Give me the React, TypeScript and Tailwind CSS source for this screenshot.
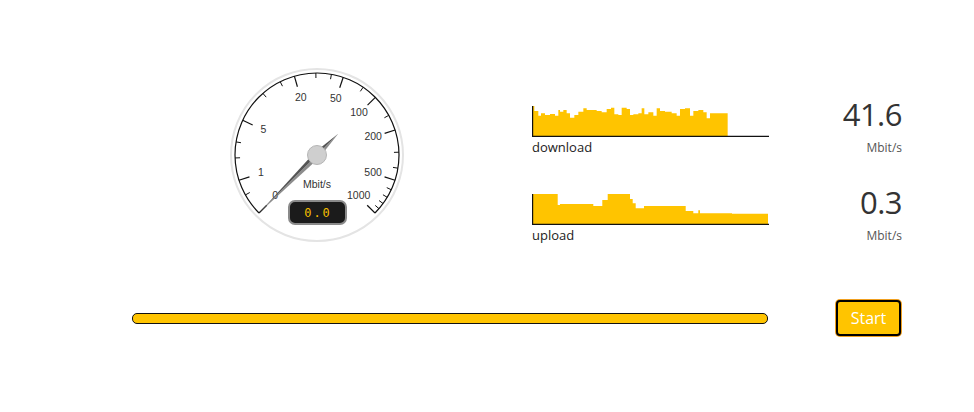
import React from "react";

const YELLOW = "#ffc400";

// gauge uses a log(1+v) scale, 270 degrees wide
const angleFor = (v: number) => -135 + (Math.log(1 + v) / Math.log(1001)) * 270;

const polar = (r: number, deg: number, cx = 89, cy = 89) => {
  const a = (deg * Math.PI) / 180;
  return { x: cx + r * Math.sin(a), y: cy - r * Math.cos(a) };
};

const majorTicks = [0, 1, 5, 20, 50, 100, 200, 500, 1000];
const minorTicks = [0.5, 2, 3, 10, 15, 30, 40, 75, 150, 300, 400, 600, 700, 800, 900];

const Gauge: React.FC = () => {
  const arcStart = polar(82, -135);
  const arcEnd = polar(82, 135);
  return (
    <svg width="178" height="178" viewBox="0 0 178 178" className="shrink-0">
      <circle cx="89" cy="89" r="86" fill="#fff" stroke="#e4e4e4" strokeWidth="2" />
      <path
        d={`M ${arcStart.x} ${arcStart.y} A 82 82 0 1 1 ${arcEnd.x} ${arcEnd.y}`}
        fill="none"
        stroke="#111"
        strokeWidth="1.2"
      />
      {majorTicks.map((v) => {
        const a = angleFor(v);
        const p1 = polar(82, a);
        const p2 = polar(71, a);
        const t = polar(59, a);
        return (
          <g key={v}>
            <line x1={p1.x} y1={p1.y} x2={p2.x} y2={p2.y} stroke="#111" strokeWidth="1.2" />
            <text
              x={t.x}
              y={t.y - 1.5}
              textAnchor="middle"
              dominantBaseline="central"
              fontSize="10.5"
              fill="#333"
              fontFamily="'Liberation Sans', Arial, sans-serif"
            >
              {v}
            </text>
          </g>
        );
      })}
      {minorTicks.map((v) => {
        const a = angleFor(v);
        const p1 = polar(82, a);
        const p2 = polar(77, a);
        return <line key={v} x1={p1.x} y1={p1.y} x2={p2.x} y2={p2.y} stroke="#111" strokeWidth="1" />;
      })}
      <text
        x="89"
        y="118"
        textAnchor="middle"
        dominantBaseline="central"
        fontSize="10.5"
        fill="#333"
        fontFamily="'Liberation Sans', Arial, sans-serif"
      >
        Mbit/s
      </text>
      <rect x="61" y="135" width="57" height="23" rx="6" fill="#1b1b1b" stroke="#8a8a8a" strokeWidth="2" />
      <text
        x="90"
        y="146.5"
        textAnchor="middle"
        dominantBaseline="central"
        fontSize="12"
        fill="#f5bf00"
        letterSpacing="2"
        fontFamily="'DejaVu Sans Mono', monospace"
      >
        0.0
      </text>
      {/* needle resting at 0 */}
      <g transform="rotate(-135 89 89)">
        <polygon points="89,7 85.5,89 89,119" fill="#8c8c8c" />
        <polygon points="89,7 92.5,89 89,119" fill="#555" />
      </g>
      <circle cx="89" cy="89" r="9.5" fill="#cfcfcf" stroke="#b5b5b5" strokeWidth="1" />
    </svg>
  );
};

// [end x in zoom coords, top y in zoom coords]
const downloadSteps: [number, number][] = [
  [28, 33], [40, 48], [48, 62], [60, 55], [75, 60], [90, 57], [100, 62], [105, 45],
  [115, 50], [125, 45], [135, 55], [148, 68], [160, 60], [175, 50], [185, 40], [195, 45],
  [215, 45], [230, 48], [245, 52], [258, 42], [268, 38], [280, 58], [290, 60], [305, 38],
  [315, 42], [325, 60], [340, 58], [350, 55], [358, 40], [370, 58], [385, 52], [395, 62],
  [405, 40], [420, 48], [440, 50], [455, 55], [465, 62], [480, 42], [495, 40], [505, 62],
  [520, 48], [535, 45], [545, 52], [555, 70], [608, 55],
];

const uploadSteps: [number, number][] = [
  [25.7, 30], [28, 19], [61.3, 20], [70.3, 18], [75.7, 24], [98, 30], [100.7, 25],
  [103.7, 20.7], [112, 15.7], [153.7, 18], [161.3, 13], [166.3, 10.7], [168, 13.7],
  [200, 10.7], [236, 10.2],
];

const stepPath = (steps: [number, number][], base: number) => {
  let d = `M 1 ${base}`;
  let x = 1;
  steps.forEach(([end, h]) => {
    d += ` L ${x} ${base - h} L ${end} ${base - h}`;
    x = end;
  });
  d += ` L ${x} ${base} Z`;
  return d;
};

const Chart: React.FC<{ steps: [number, number][] }> = ({ steps }) => (
  <svg width="237" height="31" viewBox="0 0 237 31" className="block">
    <path d={stepPath(steps, 30)} fill={YELLOW} />
    <line x1="0.6" y1="0" x2="0.6" y2="31" stroke="#111" strokeWidth="1.2" />
    <line x1="0" y1="30.4" x2="237" y2="30.4" stroke="#111" strokeWidth="1.2" />
  </svg>
);

const downloadData = downloadSteps.map(([cx, cy]) => [cx / 3 - 7, (123 - cy) / 3] as [number, number]);

const StatRow: React.FC<{ label: string; value: string; steps: [number, number][]; className?: string }> = ({
  label,
  value,
  steps,
  className,
}) => (
  <div className={`flex items-start justify-between ${className ?? ""}`}>
    <div className="mt-[7px] flex flex-col">
      <Chart steps={steps} />
      <span className="mt-[2px] text-[13px] leading-[16px] text-[#222]">{label}</span>
    </div>
    <div className="flex flex-col items-end">
      <span className="text-[31px] leading-[30px] font-normal tracking-[-0.5px] text-[#333]">{value}</span>
      <span className="mt-[11px] text-[12px] leading-[16px] text-[#555]">Mbit/s</span>
    </div>
  </div>
);

const App: React.FC = () => {
  return (
    <div
      className="w-[974px] h-[412px] bg-white overflow-hidden"
      style={{ fontFamily: "'Open Sans', 'Noto Sans', sans-serif" }}
    >
      {/* Top: gauge + charts */}
      <div className="flex pt-[66px] pl-[228px]">
        <Gauge />
        <div className="ml-[126px] w-[370px] flex flex-col">
          <StatRow className="mt-[33px]" label="download" value="41.6" steps={downloadData} />
          <StatRow className="mt-[31px]" label="upload" value="0.3" steps={uploadSteps} />
        </div>
      </div>

      {/* Bottom: progress + start */}
      <div className="flex items-center pl-[132px] mt-[56px]">
        <div className="w-[636px] h-[11px] mt-[1px] rounded-[5px] border-[1.5px] border-[#111] bg-[#ffc400]" />
        <button className="ml-[68px] w-[65px] h-[36px] rounded-[4px] border-2 border-black bg-[#ffc400] text-white text-[16px] ring-1 ring-[#f0a020]">
          Start
        </button>
      </div>
    </div>
  );
};

export default App;
